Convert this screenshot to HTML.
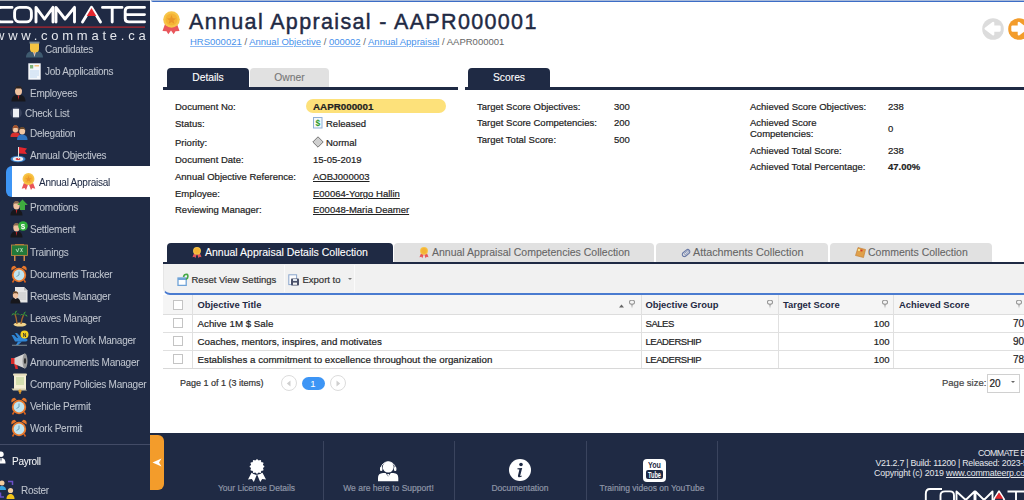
<!DOCTYPE html>
<html><head><meta charset="utf-8">
<style>
*{margin:0;padding:0;box-sizing:border-box}
html,body{width:1024px;height:500px;overflow:hidden;background:#fff;font-family:"Liberation Sans",sans-serif;color:#222}
.a{position:absolute;white-space:nowrap}
.lbl,.val,.gt,.fl{-webkit-text-stroke:0.2px currentColor}.mi{-webkit-text-stroke:0.05px currentColor}.tab{-webkit-text-stroke:0.1px currentColor}
#sb{position:absolute;left:0;top:0;width:150px;height:500px;background:#1f2a44;overflow:hidden;will-change:transform}
.mi{position:absolute;left:30px;font-size:10px;color:#bfc4ce;line-height:12px;white-space:nowrap;letter-spacing:-0.25px;margin-top:0.8px}
.ic{position:absolute}
#foot{position:absolute;left:150px;top:433px;width:874px;height:67px;background:#1f2a44}
.lbl{position:absolute;left:175px;font-size:9.5px;line-height:12px;color:#222;white-space:nowrap}
.val{position:absolute;left:313px;font-size:9.5px;line-height:12px;color:#222;white-space:nowrap}
.tab{position:absolute;border-radius:4px 4px 0 0;font-size:10.3px;line-height:19px;text-align:center;white-space:nowrap}
.navy{background:#1f2a44;color:#fff}
.grey{background:#e1e1e1;color:#666}
.gt{position:absolute;font-size:9.5px;line-height:12px;color:#222;white-space:nowrap}
.hd{position:absolute;font-size:9.4px;font-weight:bold;line-height:12px;color:#1f2a44;white-space:nowrap}
.cb{position:absolute;left:173px;width:10px;height:10px;border:1px solid #c4c4c4;background:#fff}
.fl{position:absolute;font-size:8.5px;line-height:11px;color:#8e95a6;text-align:center;white-space:nowrap}
</style></head><body>
<!-- ================= SIDEBAR ================= -->
<div id="sb">
  <div class="a" style="left:0;top:0;width:150px;height:1px;background:#a5a9b0"></div>
  <div class="a" style="left:6px;top:166px;width:144px;height:30.5px;background:#3d95f5;border-radius:6px 0 0 6px"></div>
  <div class="a" style="left:12px;top:166px;width:138px;height:30.5px;background:#fff"></div>

  <!-- logo svg -->
  <svg class="ic" style="left:0;top:0" width="150" height="42" viewBox="0 0 150 42">
    <g fill="none" stroke="#fff" stroke-width="2.9" stroke-linejoin="round" stroke-linecap="round">
      <path d="M12 7.4 L2 7.4 Q-4 7.4 -4 13 L-4 16.5 Q-4 21.9 2 21.9 L12 21.9"/>
      <rect x="14.6" y="7.4" width="16.8" height="14.5" rx="5"/>
      <path d="M36 22 L36 7.4 L44.5 19 L53 7.4 L53 22"/>
      <path d="M56 22 L56 7.4 L65 19 L74.5 7.4 L74.5 22"/>
      <path d="M82.5 22 L91.5 7.2 L100.5 22"/>
      <path d="M102.5 7.4 L122 7.4 M112.2 7.4 L112.2 22"/>
      <path d="M144.5 7.4 L129 7.4 Q125.2 7.4 125.2 11 L125.2 18.5 Q125.2 21.9 129 21.9 L144.5 21.9 M127 14.6 L144.5 14.6"/>
    </g>
    <path d="M91.5 8 L96.3 16 L86.7 16 Z" fill="#e3262d"/>
    <rect x="0" y="26.5" width="145" height="1.2" fill="#b8242c"/>
  </svg>
  <div class="a" style="left:-5px;top:27.5px;font-size:13px;color:#e4e7ec;letter-spacing:3.75px;line-height:16px">www.commate.ca</div>

  <svg class="ic" style="left:25px;top:41px" width="19" height="17" viewBox="0 0 19 17">
    <path d="M1 16.5 C1 12 4 10.5 7 10 L9.5 12 L12 10 C15 10.5 18 12 18 16.5 Z" fill="#3f5b70"/>
    <path d="M8 10.5 L9.5 16 L11 10.5 Z" fill="#e9e9e9"/><path d="M9 11 L9.5 15 L10 11 Z" fill="#e07a4a"/>
    <path d="M5 2 L14 2 L14 8 Q14 11.5 9.5 11.5 Q5 11.5 5 8 Z" fill="#f6c542"/>
    <rect x="4.5" y="0.6" width="10" height="2" fill="#7b8a94"/>
  </svg>
  <svg class="ic" style="left:27.5px;top:62.5px" width="13" height="17" viewBox="0 0 13 17">
    <rect x="0.3" y="0.3" width="12.4" height="16.4" fill="#f4f7fb"/>
    <rect x="2" y="2" width="3.2" height="3.5" fill="#7fb47a"/><rect x="6.5" y="2" width="4.5" height="1.5" fill="#f2c17a"/>
    <g stroke="#b9d3ee" stroke-width="0.9"><path d="M2 8 H11 M2 10 H11 M2 12 H11 M2 14 H9"/></g>
  </svg>
  <svg class="ic" style="left:11px;top:85px" width="15" height="17" viewBox="0 0 15 17">
    <path d="M0.5 16.5 C0.5 12 3 10.5 5 10 L7.5 11 L10 10 C12 10.5 14.5 12 14.5 16.5 Z" fill="#17171c"/>
    <path d="M6.7 10.5 L7.5 15 L8.3 10.5 Z" fill="#c4242a"/>
    <ellipse cx="7.5" cy="6" rx="3.5" ry="4.3" fill="#f0c2a0"/>
    <path d="M3.8 5.5 Q3.8 1 7.5 1 Q11.2 1 11.2 5 L10 3.5 L5 3.5 Z" fill="#2b2320"/>
  </svg>
  <svg class="ic" style="left:10px;top:107px" width="12" height="12" viewBox="0 0 12 12">
    <circle cx="6" cy="6" r="5.8" fill="#46506a" opacity="0.7"/>
    <rect x="3" y="1.8" width="6" height="8.5" fill="#eef1f5"/>
  </svg>
  <svg class="ic" style="left:10px;top:124px" width="18" height="17" viewBox="0 0 18 17">
    <path d="M0.5 13 C0.5 10 2 8.5 4.5 8.5 L7 8.5 C9 8.5 10 10 10 13 Z" fill="#d8302e"/>
    <ellipse cx="5.5" cy="5" rx="2.8" ry="3.5" fill="#f2c7a2"/>
    <path d="M2.5 5.5 Q2.5 1 5.5 1 Q8.5 1 8.5 5.5 L8.5 8 L7.5 4 L3.5 4 L2.5 8 Z" fill="#a0522d"/>
    <path d="M7 16 C7 12 9 10.5 12 10.5 C15 10.5 17.5 12 17.5 16 Z" fill="#2f74c0"/>
    <ellipse cx="12.2" cy="7" rx="3" ry="3.5" fill="#f2c7a2"/>
    <path d="M9 6.5 Q9 3 12.2 3 Q15.4 3 15.4 6.5 L14 5 L10.5 5 Z" fill="#6b4a2b"/>
  </svg>
  <svg class="ic" style="left:10px;top:146px" width="18" height="17" viewBox="0 0 18 17">
    <ellipse cx="8" cy="13" rx="7.5" ry="3.3" fill="#3b7fc4"/>
    <ellipse cx="8" cy="13" rx="5.3" ry="2.2" fill="#e8eef5"/>
    <ellipse cx="8" cy="13" rx="2.5" ry="1" fill="#d33"/>
    <rect x="8" y="1" width="1" height="12" fill="#ddd"/>
    <path d="M9 1 L17 2.5 L15 5 L17 8 L9 7.5 Z" fill="#e3262d"/>
  </svg>
  <svg class="ic" style="left:21px;top:172px" width="15" height="19" viewBox="0 0 21 26">
    <path d="M4 15 L1 23 L5 22 L7 25 L10 17 Z" fill="#e8555a"/>
    <path d="M17 15 L20 23 L16 22 L14 25 L11 17 Z" fill="#e8555a"/>
    <circle cx="10.5" cy="9.5" r="8.3" fill="#f7c548"/>
    <circle cx="10.5" cy="9.5" r="6" fill="#f5b335"/>
    <path d="M10.5 5 L11.8 8.3 L15 8.5 L12.5 10.6 L13.3 13.8 L10.5 12 L7.7 13.8 L8.5 10.6 L6 8.5 L9.2 8.3 Z" fill="#e9962a"/>
  </svg>
  <!-- promotions -->
  <svg class="ic" style="left:10px;top:199px" width="18" height="17" viewBox="0 0 18 17">
    <path d="M0.5 16.5 C0.5 12.5 2.5 11 4.5 10.5 L6.5 11.5 L8.5 10.5 C10.5 11 12.5 12.5 12.5 16.5 Z" fill="#17171c"/>
    <path d="M5.8 11 L6.5 15 L7.2 11 Z" fill="#c4242a"/>
    <ellipse cx="6.5" cy="6.5" rx="3.2" ry="4" fill="#f0c2a0"/>
    <path d="M3.3 6 Q3.3 2 6.5 2 Q9.7 2 9.7 6 L8.5 4.5 L4.5 4.5 Z" fill="#8a6a50"/>
    <path d="M12.5 0.5 L17.8 6 L15 6 L15 11 L10 11 L10 6 L7.2 6 Z" fill="#3fae3f"/>
  </svg>
  <svg class="ic" style="left:10px;top:220px" width="18" height="18" viewBox="0 0 18 18">
    <path d="M0.5 17.5 C0.5 13.5 2.5 12 4.5 11.5 L6.5 12.5 L8.5 11.5 C10.5 12 12.5 13.5 12.5 17.5 Z" fill="#17171c"/>
    <path d="M5.8 12 L6.5 16 L7.2 12 Z" fill="#c4242a"/>
    <ellipse cx="6.5" cy="7.5" rx="3.2" ry="4" fill="#f0c2a0"/>
    <path d="M3.3 7 Q3.3 3 6.5 3 Q9.7 3 9.7 7 L8.5 5.5 L4.5 5.5 Z" fill="#8a6a50"/>
    <circle cx="13" cy="6" r="4.8" fill="#2fae3a"/>
    <text x="13" y="9" font-size="8" font-weight="bold" fill="#fff" text-anchor="middle" font-family="Liberation Sans">$</text>
  </svg>
  <!-- trainings -->
  <svg class="ic" style="left:11px;top:244px" width="17" height="17" viewBox="0 0 17 17">
    <rect x="3" y="10" width="1.5" height="7" fill="#d18a45"/><rect x="12.5" y="10" width="1.5" height="7" fill="#d18a45"/>
    <rect x="4" y="0" width="9" height="1.5" fill="#b0743a"/>
    <rect x="0.5" y="1" width="16" height="10.5" fill="#22793a" stroke="#c58540" stroke-width="0.8"/>
    <path d="M5 5 L6.5 8 L8 4 M9.5 4 L11.5 8 M11.5 4 L9.5 8" stroke="#d6f0d6" stroke-width="0.7" fill="none"/>
  </svg>
  <!-- clock template -->
  <svg width="0" height="0" style="position:absolute">
    <defs>
      <g id="clk">
        <path d="M1.5 5.5 Q0.5 1.5 4.5 0.8 L6.5 2.5 Z" fill="#e8772a"/>
        <path d="M16.5 5.5 Q17.5 1.5 13.5 0.8 L11.5 2.5 Z" fill="#e8772a"/>
        <path d="M4 15 L2.5 17.5 M14 15 L15.5 17.5" stroke="#d8621e" stroke-width="1.5"/>
        <circle cx="9" cy="10" r="7.2" fill="#ea7a2d"/>
        <circle cx="9" cy="10" r="5.4" fill="#bfe4f0"/>
        <path d="M9 6.5 L9 10 L6.5 11.5" stroke="#5b8fa8" stroke-width="0.8" fill="none"/>
      </g>
    </defs>
  </svg>
  <svg class="ic" style="left:10px;top:265px" width="18" height="18" viewBox="0 0 18 18"><use href="#clk"/></svg>
  <!-- requests -->
  <svg class="ic" style="left:10px;top:286px" width="18" height="18" viewBox="0 0 18 18">
    <path d="M5 1 L14 1 L17.5 4.5 L17.5 16.5 L5 16.5 Z" fill="#e6e6e6"/>
    <path d="M14 1 L14 4.5 L17.5 4.5 Z" fill="#bbb"/>
    <g stroke="#bdbdbd" stroke-width="0.8"><path d="M7 7 H16 M7 9 H16 M7 11 H16 M7 13 H16"/></g>
    <path d="M0.5 17.5 C0.5 14 2 12.5 4 12 L5.5 13 L7 12 C9 12.5 10.5 14 10.5 17.5 Z" fill="#17171c"/>
    <ellipse cx="5.5" cy="9" rx="2.7" ry="3.4" fill="#f0c2a0"/>
    <path d="M2.8 8.5 Q2.8 5.3 5.5 5.3 Q8.2 5.3 8.2 8.5 L7 7.3 L4 7.3 Z" fill="#6b4a2b"/>
  </svg>
  <!-- leaves -->
  <svg class="ic" style="left:11px;top:309px" width="17" height="18" viewBox="0 0 17 18">
    <ellipse cx="9" cy="15.5" rx="6.5" ry="2" fill="#f3d58c"/>
    <path d="M6 15 Q5.5 9 4 5 M10 15 Q11 9 12.5 6" stroke="#a0642a" stroke-width="1.4" fill="none"/>
    <path d="M4 5 Q1 3 0.5 7 Q2 4.5 4 5.5 Q3 2 6.5 1.5 Q4.5 3.5 4.5 5.5 Q7 3.5 9 6 Q6 4.5 4 5Z" fill="#3aa13a"/>
    <path d="M12.5 6 Q10 3.5 9 7 Q11 5 12.5 6.3 Q12 3 15 2.5 Q13.5 4.5 13 6 Q16 4.5 16.5 8 Q14 5.5 12.5 6Z" fill="#3aa13a"/>
  </svg>
  <!-- return to work -->
  <svg class="ic" style="left:11px;top:330px" width="18" height="17" viewBox="0 0 18 17">
    <path d="M0.5 5 L3 5 L6 8 L13 8 Q16.5 8.5 16.5 10 Q16.5 11.5 13 11.5 L4 11.5 Z" fill="#2f86d6"/>
    <path d="M7 8 L4 3 L6 3 L11 8 Z M7 11.5 L5 15 L7 15 L11 11.5Z" fill="#2f86d6"/>
    <rect x="1" y="14.8" width="15" height="0.8" fill="#9aa"/>
    <circle cx="13.5" cy="4.5" r="4" fill="#f4d21f"/>
    <text x="13.5" y="6.5" font-size="5" font-weight="bold" fill="#333" text-anchor="middle" font-family="Liberation Sans">N</text>
  </svg>
  <!-- announcements -->
  <svg class="ic" style="left:10px;top:352px" width="18" height="18" viewBox="0 0 18 18">
    <path d="M4 12 L7 12 L8 17 L5.5 17 Z" fill="#d92b2b"/>
    <rect x="1" y="6" width="4" height="6" fill="#d92b2b"/>
    <path d="M4.5 6 L15 1.5 L15 16.5 L4.5 12 Z" fill="#d5d5d5"/>
    <ellipse cx="15" cy="9" rx="2.5" ry="7.5" fill="#9a9a9a"/>
    <ellipse cx="15" cy="9" rx="1.2" ry="3" fill="#333"/>
  </svg>
  <!-- policies -->
  <svg class="ic" style="left:11px;top:373px" width="17" height="21" viewBox="0 0 17 21">
    <rect x="3" y="1.5" width="12" height="15" fill="#f5efd4"/>
    <rect x="2" y="0.5" width="14" height="2.2" rx="1" fill="#e7dfbd"/>
    <path d="M0.5 15.5 L14 15.5 L16 17.5 L2 17.5 Z" fill="#d9d2b3"/>
    <g stroke="#a6c978" stroke-width="0.8"><path d="M5 5 H13 M5 7 H13 M5 9 H13 M5 11 H13"/></g>
    <circle cx="9" cy="18" r="1.6" fill="#e8a22b"/><rect x="8.4" y="18" width="1.2" height="3" fill="#e8a22b"/>
  </svg>
  <svg class="ic" style="left:10px;top:397px" width="18" height="18" viewBox="0 0 18 18"><use href="#clk"/></svg>
  <svg class="ic" style="left:10px;top:419px" width="18" height="18" viewBox="0 0 18 18"><use href="#clk"/></svg>
  <!-- payroll -->
  <svg class="ic" style="left:-4px;top:451px" width="10" height="14" viewBox="0 0 10 14">
    <circle cx="5" cy="3.2" r="2.7" fill="#fff"/>
    <path d="M0.5 12.5 C0.5 8.5 2 7 5 7 C8 7 9.5 8.5 9.5 12.5 Z" fill="#fff"/>
    <path d="M4.3 7.3 L5 11 L5.7 7.3 Z" fill="#1f2a44"/>
  </svg>
  <!-- roster -->
  <svg class="ic" style="left:-2px;top:480px" width="17" height="20" viewBox="0 0 17 20">
    <circle cx="4" cy="3" r="2.5" fill="#f5cfa0"/>
    <path d="M0 10 C0 7 2 6 4 6 C6 6 8 7 8 10 Z" fill="#35a4e0"/>
    <path d="M10 1.5 L14.5 1.5 L14.5 5" stroke="#6a50c8" stroke-width="1.5" fill="none"/>
    <path d="M2.5 12.5 L2.5 17 L6 17" stroke="#6a50c8" stroke-width="1.5" fill="none"/>
    <circle cx="12.5" cy="10.5" r="2.6" fill="#f5cfa0"/>
    <path d="M8.5 19 C8.5 15.5 10.5 14 12.5 14 C14.5 14 16.5 15.5 16.5 19 Z" fill="#f2c318"/>
  </svg>

  <div class="mi" style="left:45px;top:43px">Candidates</div>
  <div class="mi" style="left:45px;top:65px">Job Applications</div>
  <div class="mi" style="top:87px">Employees</div>
  <div class="mi" style="left:25px;top:107px">Check List</div>
  <div class="mi" style="top:127px">Delegation</div>
  <div class="mi" style="top:149px">Annual Objectives</div>
  <div class="mi" style="left:39px;top:176px;color:#1f2a44">Annual Appraisal</div>
  <div class="mi" style="top:201px">Promotions</div>
  <div class="mi" style="top:223px">Settlement</div>
  <div class="mi" style="top:246px">Trainings</div>
  <div class="mi" style="top:268px">Documents Tracker</div>
  <div class="mi" style="top:290px">Requests Manager</div>
  <div class="mi" style="top:312px">Leaves Manager</div>
  <div class="mi" style="top:334px">Return To Work Manager</div>
  <div class="mi" style="top:356px">Announcements Manager</div>
  <div class="mi" style="top:378px">Company Policies Manager</div>
  <div class="mi" style="top:400px">Vehicle Permit</div>
  <div class="mi" style="top:422px">Work Permit</div>
  <div class="a" style="left:0;top:444px;width:150px;height:1px;background:#424b66"></div>
  <div class="mi" style="left:12px;top:455px;color:#f4f5f7;font-size:10px">Payroll</div>
  <div class="mi" style="left:21px;top:484px">Roster</div>
</div>


<!-- ================= MAIN ================= -->
<div class="a" style="left:151px;top:0;width:873px;height:2px;background:#3d6dc6;border-top:1px solid #a9bbdb;border-radius:0 0 0 3px"></div>
<!-- title icon -->
<svg class="ic" style="left:161px;top:10px" width="21" height="26" viewBox="0 0 21 26">
  <path d="M4 14 L1.5 21 L5.5 21.2 L7.3 24.2 L10 20.5 L12.7 24.2 L14.5 21.2 L18.5 21 L16 14 Z" fill="#e9575c"/>
  <circle cx="10.5" cy="9.5" r="8.3" fill="#f7c548"/>
  <circle cx="10.5" cy="9.5" r="6" fill="#f5b335"/>
  <path d="M10.5 5 L11.8 8.3 L15 8.5 L12.5 10.6 L13.3 13.8 L10.5 12 L7.7 13.8 L8.5 10.6 L6 8.5 L9.2 8.3 Z" fill="#e9962a"/>
</svg>
<div class="a" style="left:189px;top:9px;font-size:21.5px;color:#1f2a44;line-height:26px;letter-spacing:1.35px;-webkit-text-stroke:0.45px #1f2a44">Annual Appraisal - AAPR000001</div>
<div class="a" style="left:190px;top:36px;font-size:9.5px;line-height:12px;color:#666"><span style="color:#4691ec;text-decoration:underline;text-decoration-color:#8fbaf2">HRS000021</span> / <span style="color:#4691ec;text-decoration:underline;text-decoration-color:#8fbaf2">Annual Objective</span> / <span style="color:#4691ec;text-decoration:underline;text-decoration-color:#8fbaf2">000002</span> / <span style="color:#4691ec;text-decoration:underline;text-decoration-color:#8fbaf2">Annual Appraisal</span> / AAPR000001</div>
<!-- nav arrows -->
<svg class="ic" style="left:982px;top:17.5px" width="22" height="22" viewBox="0 0 22 22"><circle cx="11" cy="11" r="10.8" fill="#dcdcdc"/><path d="M3.6 10.6 L11.2 4.8 L11.2 8.6 L17.6 8.6 L17.6 12.6 L11.2 12.6 L11.2 16.4 Z" fill="#fff" stroke="#fff" stroke-width="2.2" stroke-linejoin="round"/></svg>
<svg class="ic" style="left:1008px;top:17.5px" width="22" height="22" viewBox="0 0 22 22"><circle cx="11" cy="11" r="10.8" fill="#f39c2b"/><path d="M18.4 10.6 L10.8 4.8 L10.8 8.6 L4.4 8.6 L4.4 12.6 L10.8 12.6 L10.8 16.4 Z" fill="#fff" stroke="#fff" stroke-width="2.2" stroke-linejoin="round"/></svg>

<!-- details tabs -->
<div class="tab navy" style="left:167px;top:68px;width:82px">Details</div>
<div class="tab grey" style="left:250px;top:68px;width:79px;color:#777">Owner</div>
<div class="a" style="left:163px;top:87px;width:295px;height:2.6px;background:#1f2a44"></div>
<div class="lbl" style="top:101px">Document No:</div>
<div class="a" style="left:306px;top:99px;width:140px;height:14px;background:#fde17a;border-radius:7px"></div>
<div class="val" style="top:100.5px;font-weight:bold;font-size:9.8px">AAPR000001</div>
<div class="lbl" style="top:118px">Status:</div>
<svg class="ic" style="left:313px;top:117px" width="10" height="12" viewBox="0 0 10 12"><rect x="0.5" y="0.5" width="8.5" height="10.5" fill="#f4f8fc" stroke="#8fb0d8" stroke-width="1"/><text x="4.8" y="8.8" font-size="8.5" font-weight="bold" fill="#2a9a2a" text-anchor="middle" font-family="Liberation Sans">$</text></svg>
<div class="val" style="left:326px;top:118px">Released</div>
<div class="lbl" style="top:137px">Priority:</div>
<svg class="ic" style="left:312px;top:136px" width="12" height="12" viewBox="0 0 12 12"><path d="M6 0.8 L11.2 6 L6 11.2 L0.8 6 Z" fill="#cfcfcf" stroke="#777" stroke-width="1"/></svg>
<div class="val" style="left:326px;top:137px">Normal</div>
<div class="lbl" style="top:154px">Document Date:</div>
<div class="val" style="top:154px">15-05-2019</div>
<div class="lbl" style="top:171px">Annual Objective Reference:</div>
<div class="val" style="top:171px;text-decoration:underline">AOBJ000003</div>
<div class="lbl" style="top:188px">Employee:</div>
<div class="val" style="top:188px;text-decoration:underline">E00064-Yorgo Hallin</div>
<div class="lbl" style="top:204px">Reviewing Manager:</div>
<div class="val" style="top:204px;text-decoration:underline">E00048-Maria Deamer</div>

<!-- scores -->
<div class="tab navy" style="left:468px;top:68px;width:82px">Scores</div>
<div class="a" style="left:465px;top:87px;width:559px;height:2.6px;background:#1f2a44"></div>
<div class="gt" style="left:477px;top:101px">Target Score Objectives:</div>
<div class="gt" style="left:614px;top:101px">300</div>
<div class="gt" style="left:477px;top:117px">Target Score Competencies:</div>
<div class="gt" style="left:614px;top:117px">200</div>
<div class="gt" style="left:477px;top:134px">Target Total Score:</div>
<div class="gt" style="left:614px;top:134px">500</div>
<div class="gt" style="left:750px;top:101px">Achieved Score Objectives:</div>
<div class="gt" style="left:888px;top:101px">238</div>
<div class="gt" style="left:750px;top:117px;line-height:11px">Achieved Score<br>Competencies:</div>
<div class="gt" style="left:888px;top:123px">0</div>
<div class="gt" style="left:750px;top:145px">Achieved Total Score:</div>
<div class="gt" style="left:888px;top:145px">238</div>
<div class="gt" style="left:750px;top:161px">Achieved Total Percentage:</div>
<div class="gt" style="left:888px;top:161px;font-weight:bold">47.00%</div>

<!-- collection tabs -->
<div class="tab navy" style="left:167px;top:243px;width:226px;text-align:left;padding-left:38px;font-size:10.5px">Annual Appraisal Details Collection</div>
<div class="tab grey" style="left:394px;top:243px;width:260px;text-align:left;padding-left:38px;font-size:10.5px">Annual Appraisal Competencies Collection</div>
<div class="tab grey" style="left:656px;top:243px;width:172px;text-align:left;padding-left:37px;font-size:10.8px">Attachments Collection</div>
<div class="tab grey" style="left:830px;top:243px;width:162px;text-align:left;padding-left:38px;font-size:10.5px">Comments Collection</div>
<div class="a" style="left:163px;top:262px;width:861px;height:2px;background:#1f2a44"></div>
<!-- toolbar -->
<div class="a" style="left:163px;top:264px;width:861px;height:31px;background:#f1f1f1;border-bottom:2px solid #4a7bd0;border-left:1px solid #e6e6e6;border-radius:0 0 0 7px"></div>
<div class="a" style="left:284px;top:265px;width:1px;height:27px;background:#fafafa"></div>
<div class="a" style="left:354px;top:265px;width:1px;height:27px;background:#fafafa"></div>
<div class="gt" style="left:191.5px;top:274px;color:#333">Reset View Settings</div>
<div class="gt" style="left:302.5px;top:274px;color:#333">Export to</div>
<div class="a" style="left:347.5px;top:278px;width:0;height:0;border-left:2px solid transparent;border-right:2px solid transparent;border-top:2px solid #777"></div>

<!-- grid -->
<div class="a" style="left:163px;top:295px;width:861px;height:20px;background:#f5f5f5;border-bottom:1px solid #ddd"></div>
<div class="a" style="left:163px;top:332px;width:861px;height:1px;background:#e0e0e0"></div>
<div class="a" style="left:163px;top:350px;width:861px;height:1px;background:#e0e0e0"></div>
<div class="a" style="left:163px;top:368px;width:861px;height:1px;background:#d8d8d8"></div>
<div class="a" style="left:192px;top:295px;width:1px;height:73px;background:#e0e0e0"></div>
<div class="a" style="left:641px;top:295px;width:1px;height:73px;background:#e0e0e0"></div>
<div class="a" style="left:778px;top:295px;width:1px;height:73px;background:#e0e0e0"></div>
<div class="a" style="left:893px;top:295px;width:1px;height:73px;background:#e0e0e0"></div>
<div class="cb" style="top:300px"></div>
<div class="cb" style="top:318px"></div>
<div class="cb" style="top:336px"></div>
<div class="cb" style="top:354px"></div>
<div class="hd" style="left:197.5px;top:299px">Objective Title</div>
<div class="hd" style="left:645.5px;top:299px">Objective Group</div>
<div class="hd" style="left:783px;top:299px">Target Score</div>
<div class="hd" style="left:899px;top:299px">Achieved Score</div>
<div class="gt" style="left:197.5px;top:317.7px;font-size:9.75px">Achive 1M $ Sale</div>
<div class="gt" style="left:197.5px;top:335.7px;font-size:9.75px">Coaches, mentors, inspires, and motivates</div>
<div class="gt" style="left:197.5px;top:353.7px;font-size:9.75px">Establishes a commitment to excellence throughout the organization</div>
<div class="gt" style="left:645.5px;top:317.7px;letter-spacing:-0.45px">SALES</div>
<div class="gt" style="left:645.5px;top:335.7px;letter-spacing:-0.45px">LEADERSHIP</div>
<div class="gt" style="left:645.5px;top:353.7px;letter-spacing:-0.45px">LEADERSHIP</div>
<div class="gt" style="left:860px;width:29.5px;text-align:right;top:317.7px">100</div>
<div class="gt" style="left:860px;width:29.5px;text-align:right;top:335.7px">100</div>
<div class="gt" style="left:860px;width:29.5px;text-align:right;top:353.7px">100</div>
<div class="gt" style="left:1013px;font-size:10px;top:317.7px">70</div>
<div class="gt" style="left:1013px;font-size:10px;top:335.7px">90</div>
<div class="gt" style="left:1013px;font-size:10px;top:353.7px">78</div>

<!-- pager -->
<div class="gt" style="left:180px;top:377px;font-size:9px;color:#333">Page 1 of 1 (3 items)</div>
<div class="a" style="left:280.5px;top:374.5px;width:16px;height:16px;border:1.5px solid #dcdcdc;border-radius:50%"></div>
<div class="a" style="left:301.5px;top:377px;width:23px;height:13px;background:#3d95f5;border-radius:7px;color:#fff;font-size:9.5px;line-height:13px;text-align:center">1</div>
<div class="a" style="left:329.5px;top:374.5px;width:16px;height:16px;border:1.5px solid #dcdcdc;border-radius:50%"></div>
<div class="gt" style="left:942px;top:377px;color:#444">Page size:</div>
<div class="a" style="left:987px;top:374px;width:33px;height:19px;border:1px solid #d0d0d0;background:#fff"></div>
<div class="gt" style="left:989.5px;top:378px;font-size:10px">20</div>
<div class="a" style="left:1011px;top:381px;width:0;height:0;border-left:2.5px solid transparent;border-right:2.5px solid transparent;border-top:2.5px solid #666"></div>


<!-- tab icons -->
<svg class="ic" style="left:192px;top:246px" width="10" height="13" viewBox="0 0 21 26">
  <path d="M4 15 L1 23 L5 22 L7 25 L10 17 Z" fill="#e8555a"/><path d="M17 15 L20 23 L16 22 L14 25 L11 17 Z" fill="#e8555a"/>
  <circle cx="10.5" cy="9.5" r="8.3" fill="#f7c548"/><circle cx="10.5" cy="9.5" r="6" fill="#f5b335"/>
</svg>
<svg class="ic" style="left:418.5px;top:246px" width="10" height="13" viewBox="0 0 21 26">
  <path d="M4 15 L1 23 L5 22 L7 25 L10 17 Z" fill="#e8555a"/><path d="M17 15 L20 23 L16 22 L14 25 L11 17 Z" fill="#e8555a"/>
  <circle cx="10.5" cy="9.5" r="8.3" fill="#f7c548"/><circle cx="10.5" cy="9.5" r="6" fill="#f5b335"/>
</svg>
<svg class="ic" style="left:681px;top:247.5px" width="10" height="10" viewBox="0 0 10 10">
  <g transform="rotate(-40 5 5)"><rect x="0.8" y="3" width="8.4" height="4.2" rx="2.1" fill="none" stroke="#6a7aa6" stroke-width="1.2"/><rect x="3" y="4.3" width="5.2" height="1.6" rx="0.8" fill="none" stroke="#8a9ac0" stroke-width="0.9"/></g>
</svg>
<svg class="ic" style="left:855px;top:247px" width="11" height="11" viewBox="0 0 11 11">
  <path d="M3 0.5 L10.5 2.5 L8.5 10.5 L0.5 8.5 Z" fill="#e0a04a" stroke="#c07a30" stroke-width="0.6"/>
  <rect x="3" y="2" width="2" height="2" fill="#f6e08a"/><rect x="5.5" y="2.6" width="2" height="1.8" fill="#d63a2a"/>
</svg>
<!-- toolbar icons -->
<svg class="ic" style="left:177px;top:273px" width="12" height="13" viewBox="0 0 12 13">
  <rect x="1" y="5" width="8.2" height="7.4" fill="#fff" stroke="#6fa3d8" stroke-width="1.3"/>
  <rect x="1" y="5" width="8.2" height="2" fill="#6fa3d8"/>
  <path d="M6.5 4 Q7 1 10 1.2 Q11.5 2 10.5 5 L9 6.5" fill="none" stroke="#45a845" stroke-width="1.6"/>
</svg>
<svg class="ic" style="left:287.5px;top:273.5px" width="12" height="12" viewBox="0 0 12 12">
  <rect x="0.8" y="0.8" width="7.8" height="9.8" fill="#fbfbfd" stroke="#8aa6cc" stroke-width="1"/>
  <rect x="3" y="4.5" width="8" height="7" rx="0.8" fill="#4a5068"/>
  <rect x="5" y="5" width="4" height="2" fill="#dfe6ef"/><rect x="5" y="8.6" width="4" height="2.2" fill="#f4f4f4"/>
</svg>
<!-- header sort/pins -->
<svg width="0" height="0" style="position:absolute"><defs>
  <g id="pin"><ellipse cx="3" cy="2.2" rx="2.6" ry="2" fill="none" stroke="#999" stroke-width="1.1"/><path d="M2.2 4 L3.8 4 L3 8.5 Z" fill="#999"/></g>
</defs></svg>
<svg class="ic" style="left:618.5px;top:303.5px" width="5" height="4" viewBox="0 0 5 4"><path d="M0 3.5 L2.5 0.5 L5 3.5 Z" fill="#666"/></svg>
<svg class="ic" style="left:629px;top:300px" width="6" height="9" viewBox="0 0 6 9"><use href="#pin"/></svg>
<svg class="ic" style="left:766.5px;top:300px" width="6" height="9" viewBox="0 0 6 9"><use href="#pin"/></svg>
<svg class="ic" style="left:881.5px;top:300px" width="6" height="9" viewBox="0 0 6 9"><use href="#pin"/></svg>
<svg class="ic" style="left:1015.5px;top:300px" width="6" height="9" viewBox="0 0 6 9"><use href="#pin"/></svg>
<!-- pager arrows -->
<svg class="ic" style="left:286px;top:379.5px" width="5" height="7" viewBox="0 0 5 7"><path d="M4.5 0.5 L0.8 3.5 L4.5 6.5 Z" fill="#cfcfcf"/></svg>
<svg class="ic" style="left:336px;top:379.5px" width="5" height="7" viewBox="0 0 5 7"><path d="M0.5 0.5 L4.2 3.5 L0.5 6.5 Z" fill="#cfcfcf"/></svg>

<!-- footer -->
<div id="foot">
  <div class="a" style="left:172.5px;top:7.5px;width:1px;height:60px;background:#3a445e"></div>
  <div class="a" style="left:304px;top:7.5px;width:1px;height:60px;background:#3a445e"></div>
  <div class="a" style="left:436px;top:7.5px;width:1px;height:60px;background:#3a445e"></div>
  <div class="a" style="left:567px;top:7.5px;width:1px;height:60px;background:#3a445e"></div>
  <!-- license icon -->
  <svg class="ic" style="left:97px;top:25.5px" width="20" height="23" viewBox="0 0 20 23">
    <path d="M6 11 L1 20.5 L4.8 20 L6.8 23 L10.5 14 Z" fill="#fff"/>
    <path d="M14 11 L19 20.5 L15.2 20 L13.2 23 L9.5 14 Z" fill="#fff"/>
    <circle cx="10" cy="7.5" r="8.3" fill="#1f2a44"/>
    <circle cx="10" cy="7.5" r="6.4" fill="#fff"/>
    <g fill="#fff"><circle cx="16.30" cy="7.50" r="1.05"/><circle cx="15.46" cy="10.65" r="1.05"/><circle cx="13.15" cy="12.96" r="1.05"/><circle cx="10.00" cy="13.80" r="1.05"/><circle cx="6.85" cy="12.96" r="1.05"/><circle cx="4.54" cy="10.65" r="1.05"/><circle cx="3.70" cy="7.50" r="1.05"/><circle cx="4.54" cy="4.35" r="1.05"/><circle cx="6.85" cy="2.04" r="1.05"/><circle cx="10.00" cy="1.20" r="1.05"/><circle cx="13.15" cy="2.04" r="1.05"/><circle cx="15.46" cy="4.35" r="1.05"/></g>
  </svg>
  <div class="fl" style="left:40px;width:133px;top:50px">Your License Details</div>
  <!-- support icon -->
  <svg class="ic" style="left:227px;top:26px" width="23" height="23" viewBox="0 0 23 23">
    <path d="M3.9 9 A7.4 7.4 0 0 1 18.5 9" fill="none" stroke="#fff" stroke-width="1"/>
    <rect x="3" y="8" width="2.4" height="4" rx="1.1" fill="#fff"/>
    <rect x="17" y="8" width="2.4" height="4" rx="1.1" fill="#fff"/>
    <circle cx="11.2" cy="8.1" r="5.5" fill="#fff"/>
    <path d="M1 22.3 L1 19 Q1 14.3 6 14.1 L16.4 14.1 Q21.3 14.3 21.3 19 L21.3 22.3 Z" fill="#fff"/>
    <path d="M8.6 14.1 L11.2 17.8 L13.8 14.1 Z" fill="#1f2a44"/>
    <path d="M10.2 15 L11.2 19 L12.2 15 Z" fill="#fff"/>
  </svg>
  <div class="fl" style="left:172px;width:133px;top:50px">We are here to Support!</div>
  <!-- info icon -->
  <svg class="ic" style="left:359px;top:26px" width="22" height="22" viewBox="0 0 22 22">
    <circle cx="11" cy="11" r="11" fill="#fff"/>
    <circle cx="12" cy="5.5" r="1.8" fill="#1f2a44"/>
    <path d="M8.5 9.2 L13.2 9 L11.3 16.2 C11.1 17 11.6 17.2 12.8 16.4 L13 17.2 C11 18.8 8.5 18.8 9 16.6 L10.4 10.6 L8.4 10.2 Z" fill="#1f2a44"/>
  </svg>
  <div class="fl" style="left:304px;width:132px;top:50px">Documentation</div>
  <!-- youtube icon -->
  <svg class="ic" style="left:493px;top:26px" width="23" height="23" viewBox="0 0 23 23">
    <rect x="0" y="0" width="23" height="23" rx="4" fill="#fff"/>
    <text x="11.5" y="9.3" font-family="Liberation Sans" font-size="8.5" font-weight="bold" fill="#1f2a44" text-anchor="middle" textLength="13" lengthAdjust="spacingAndGlyphs">You</text>
    <rect x="3" y="11" width="17" height="9" rx="2" fill="#1f2a44"/>
    <text x="11.5" y="18.6" font-family="Liberation Sans" font-size="8.5" font-weight="bold" fill="#fff" text-anchor="middle" textLength="13" lengthAdjust="spacingAndGlyphs">Tube</text>
  </svg>
  <div class="fl" style="left:436px;width:132px;top:50px">Training videos on YouTube</div>
  <!-- right text -->
  <div class="a" style="left:828px;top:15px;font-size:8.8px;line-height:11px;color:#e6e8ec;letter-spacing:-0.55px">COMMATE ERP</div>
  <div class="a" style="left:725.5px;top:25px;font-size:8.8px;line-height:11px;color:#e6e8ec;letter-spacing:-0.25px">V21.2.7 | Build: 11200 | Released: 2023-5-1</div>
  <div class="a" style="left:724px;top:35px;font-size:8.8px;line-height:11px;color:#e6e8ec;letter-spacing:-0.15px">Copyright (c) 2019 <span style="text-decoration:underline">www.commateerp.com</span></div>
  <svg class="ic" style="left:770px;top:53px" width="104" height="14" viewBox="0 0 104 14">
    <g fill="none" stroke="#fff" stroke-width="1.9" stroke-linejoin="round">
      <path d="M22 3 L10 3 Q5.8 3 5.8 8 L5.8 14"/>
      <path d="M20.5 14 L20.5 9.5 Q20.5 5.4 25 5.4 L30 5.4 Q34 5.4 34 9.5 L34 14"/>
      <path d="M36.5 14 L36.5 5.5 L45.7 14 L54.5 5.5 L54.5 14"/>
      <path d="M55.5 14 L55.5 5.5 L64 14 L72.5 5.5 L72.5 14"/>
      <path d="M73.5 14 L79 5.2 L84.5 14"/>
      <path d="M87.5 5.5 L104 5.5 M96 5.5 L96 14"/>
    </g>
    <path d="M79 6.5 L83.2 12.8 L74.8 12.8 Z" fill="#e3262d"/>
  </svg>
</div>
<!-- collapse tab -->
<div class="a" style="left:150px;top:435px;width:14px;height:55px;background:#f39c2b;border-radius:0 6px 6px 0"></div>
<svg class="ic" style="left:152px;top:458px" width="10" height="9" viewBox="0 0 10 9"><path d="M0.5 4.5 L9.5 0.5 L7 4.5 L9.5 8.5 Z" fill="#fff"/></svg>
</body></html>
